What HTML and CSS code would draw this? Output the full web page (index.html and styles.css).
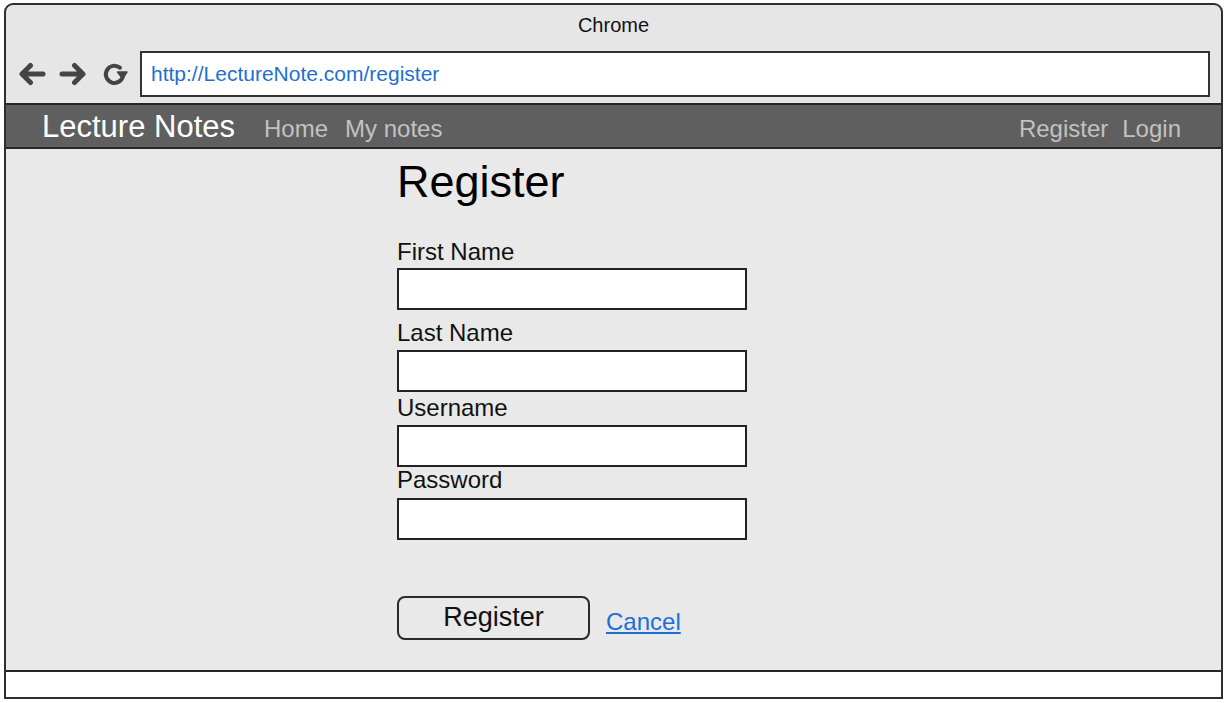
FILE: index.html
```html
<!DOCTYPE html>
<html lang="en">
<head>
<meta charset="utf-8">
<title>Register - Lecture Notes</title>
<link rel="stylesheet" href="styles.css">
</head>
<body>
<div class="window">
  <div class="titlebar">Chrome</div>
  <div class="toolbar">
    <svg class="icon icon-back" width="28" height="24" viewBox="0 0 28 24" aria-hidden="true">
      <path d="M25 12H4.5M12.5 3.5L4 12L12.5 20.5" fill="none" stroke="#444" stroke-width="5" stroke-linecap="round" stroke-linejoin="round"/>
    </svg>
    <svg class="icon icon-forward" width="28" height="24" viewBox="0 0 28 24" aria-hidden="true">
      <path d="M3 12H23.5M15.5 3.5L24 12L15.5 20.5" fill="none" stroke="#444" stroke-width="5" stroke-linecap="round" stroke-linejoin="round"/>
    </svg>
    <svg class="icon icon-reload" width="26" height="24" viewBox="0 0 26 24" aria-hidden="true">
      <path d="M18 5.8A8.6 8.6 0 1 0 21 13.2" fill="none" stroke="#444" stroke-width="4" stroke-linecap="round"/>
      <path d="M15.5 10L25 10L20.6 16.8Z" fill="#444" stroke="#444" stroke-width="1.4" stroke-linejoin="round"/>
    </svg>
    <div class="urlbar">http://LectureNote.com/register</div>
  </div>
  <nav class="navbar">
    <div class="nav-left">
      <span class="brand">Lecture Notes</span>
      <a class="nav-link nav-home" href="#">Home</a>
      <a class="nav-link" href="#">My notes</a>
    </div>
    <div class="nav-right">
      <a class="nav-link" href="#">Register</a>
      <a class="nav-link nav-login" href="#">Login</a>
    </div>
  </nav>
  <main class="content">
    <form class="form">
      <h1 class="title">Register</h1>
      <label class="label label-first" for="fn">First Name</label>
      <input class="field field-first" id="fn" type="text">
      <label class="label label-last" for="ln">Last Name</label>
      <input class="field" id="ln" type="text">
      <label class="label label-user" for="un">Username</label>
      <input class="field" id="un" type="text">
      <label class="label label-pass" for="pw">Password</label>
      <input class="field field-pass" id="pw" type="password">
      <div class="actions">
        <button class="btn" type="button">Register</button>
        <a class="cancel" href="#">Cancel</a>
      </div>
    </form>
  </main>
  <div class="statusbar"></div>
</div>
</body>
</html>
```

FILE: styles.css
```css
html, body {
  margin: 0;
  padding: 0;
  background: #ffffff;
  overflow: hidden;
}

body {
  font-family: "Liberation Sans", Arial, sans-serif;
  color: #111;
}

.window {
  box-sizing: border-box;
  margin: 3px 4px 0 4px;
  height: 696px;
  border: 2px solid #2f2f2f;
  border-radius: 9px 9px 0 0;
  background: #e6e6e6;
  display: flex;
  flex-direction: column;
  overflow: hidden;
}

.titlebar {
  height: 40px;
  line-height: 40px;
  text-align: center;
  font-size: 20px;
  color: #111;
}

.toolbar {
  height: 58px;
  display: flex;
  align-items: center;
  padding: 0 11px 0 12px;
}

.icon {
  flex: none;
  display: block;
}

.icon-forward {
  margin-left: 13px;
}

.icon-reload {
  margin-left: 15px;
}

.urlbar {
  flex: 1;
  box-sizing: border-box;
  height: 46px;
  margin-left: 12px;
  border: 2px solid #333;
  background: #fff;
  color: #1f6fd2;
  font-size: 21px;
  line-height: 42px;
  padding-left: 9px;
  white-space: nowrap;
}

.navbar {
  height: 42px;
  background: #5f5f5f;
  border-top: 2px solid #262626;
  border-bottom: 2px solid #262626;
  display: flex;
  align-items: baseline;
  justify-content: space-between;
  padding: 0 40px 0 36px;
  line-height: 44px;
}

.nav-left,
.nav-right {
  display: flex;
  align-items: baseline;
}

.brand {
  font-size: 31px;
  color: #ffffff;
}

.nav-link {
  font-size: 24px;
  color: #c2c2c2;
  text-decoration: none;
}

.nav-home {
  margin-left: 29px;
}

.nav-home + .nav-link {
  margin-left: 17px;
}

.nav-login {
  margin-left: 14px;
}

.content {
  flex: 1;
  background: #e9e9e9;
  padding: 7px 0 0 391px;
}

.form {
  width: 350px;
  display: flex;
  flex-direction: column;
  align-items: flex-start;
}

.title {
  margin: 0;
  font-size: 45px;
  font-weight: normal;
  line-height: 52px;
  color: #000;
}

.label {
  display: block;
  font-size: 24px;
  line-height: 28px;
  color: #111;
}

.label-first {
  margin-top: 30px;
}

.label-last {
  margin-top: 9px;
}

.label-user {
  margin-top: 2px;
}

.label-pass {
  margin-top: -1px;
}

.field {
  display: block;
  box-sizing: border-box;
  width: 350px;
  height: 42px;
  margin: 3px 0 0 0;
  padding: 0 6px;
  border: 2px solid #222;
  border-radius: 0;
  background: #fff;
  font-family: inherit;
  font-size: 20px;
  outline: none;
}

.field-first {
  margin-top: 2px;
}

.field-pass {
  margin-top: 4px;
}

.actions {
  display: flex;
  align-items: flex-start;
  margin-top: 56px;
}

.btn {
  box-sizing: border-box;
  width: 193px;
  height: 44px;
  border: 2px solid #2a2a2a;
  border-radius: 8px;
  background: #e9e9e9;
  font-family: inherit;
  font-size: 27px;
  line-height: 38px;
  color: #111;
  padding: 0 0 2px 0;
}

.cancel {
  margin: 12px 0 0 16px;
  font-size: 24px;
  line-height: 28px;
  color: #1b6fd6;
  text-decoration: underline;
}

.statusbar {
  flex: none;
  height: 25px;
  background: #ffffff;
  border-top: 2px solid #262626;
}
```
